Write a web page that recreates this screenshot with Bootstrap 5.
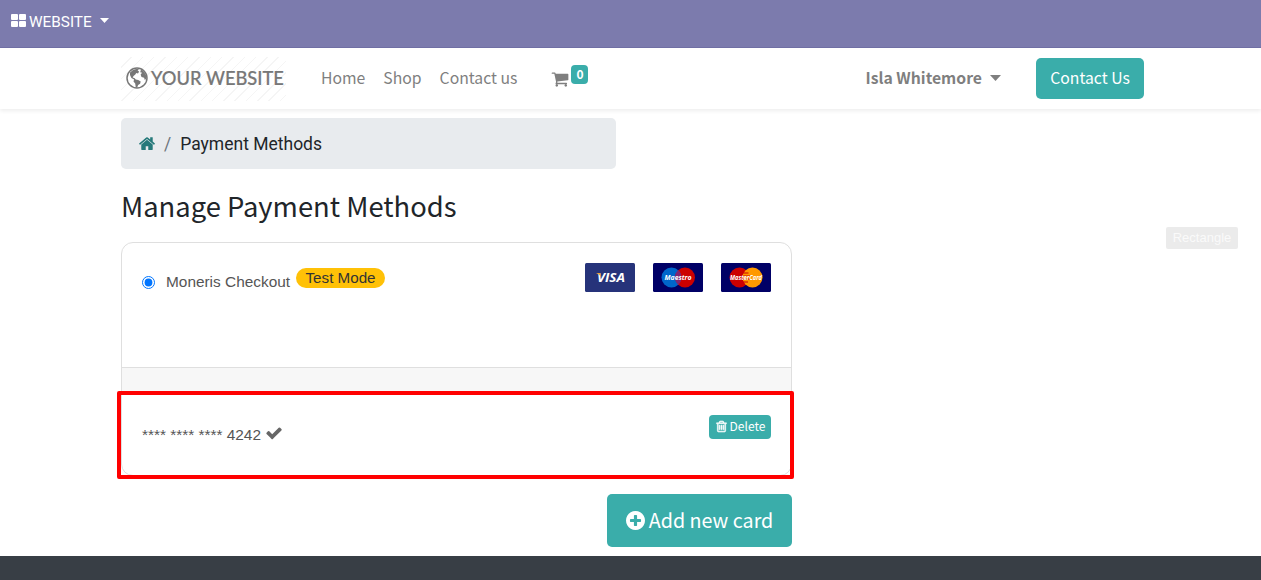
<!DOCTYPE html>
<html lang="en">
<head>
<meta charset="utf-8">
<title>Payment Methods</title>
<meta name="viewport" content="width=device-width, initial-scale=1">
<link href="https://cdn.jsdelivr.net/npm/bootstrap@5.3.0/dist/css/bootstrap.min.css" rel="stylesheet">
<style>
body{font-family:"Noto Sans CJK SC","Open Sans",sans-serif;color:#212529;height:580px;overflow:hidden;background:#fff}
.fa-i{fill:currentColor;flex:none;display:block}
.topbar{height:48px;background:#7c7bad;border-bottom:1px solid #7170a6;font:15.3px/20px Roboto,sans-serif;padding:11px 0 0 11px}
.topbar span{margin:1px 0 0 3px}
.site-nav{height:61px;box-shadow:0 2px 4px rgba(0,0,0,.07);padding:0 117px 0 121px}
.site-nav,.site-nav a{color:#7f7f7f;font-size:15.75px;line-height:24px}
.site-logo{width:165px;height:44px;padding:0 0 2px 5px;background:repeating-linear-gradient(135deg,#fff 0 7px,#f5f5f5 7px 8px);white-space:nowrap}
.site-logo span{font:500 18.3px/24px Lato,sans-serif;color:#777;-webkit-text-stroke:.2px #777;margin-left:3px}
.menu{margin:-1px 0 0 35px;gap:18px}
.cart{margin:-3px 0 0 34px}
.cart-count{font-size:12px;line-height:12px;width:17px;height:19px;padding:3px 0 0;border-radius:4px;background:#3aadaa;font-weight:700;margin:-2px 0 0 2px}
.user-link{margin-top:-2px}
.btn-teal,.btn-teal:hover{background:#3aadaa;color:#fff;border:0}
.site-nav .cta{color:#fff;width:108px;height:41px;border-radius:5px;padding:8px 0 7px;margin-left:35px}
.content-col{width:671px;margin-left:121px}
.crumbs{width:495px;height:51px;background:#e8ebee;border-radius:5px;margin-top:9px;padding:0 0 0 18px;font:17.5px/24px Roboto,sans-serif}
h1.title{font-size:27.35px;line-height:36px;font-weight:400;margin:18px 0 19px;height:36px;white-space:nowrap}
.methods{height:234px;border:1px solid #dfdfdf;border-radius:12px;font:15.4px/22px "Liberation Sans",sans-serif;color:#555}
.method{height:124px;padding:20px}
.method input{width:13px;height:13px;margin:0}
.test{font:15.2px/20px "Liberation Sans",sans-serif;height:20px;width:89px;padding:0;background:#ffc107;color:#333}
.divider{height:25px;background:#f7f7f7;border-top:1px solid #dfdfdf}
.saved{padding:23px 20px 0}
.highlight{position:absolute;left:-5px;top:148px;width:677px;height:88px;border:4.5px solid #f00;border-radius:2px}
.del{width:62px;height:24px;border-radius:4px;font:12px/18px "Noto Sans CJK SC","Open Sans",sans-serif;padding:0 0 2px}
.add{width:185px;height:53px;border-radius:5px;font-size:19.7px;line-height:30px;padding:0;margin-top:18px}
.add span{margin-top:-1px}
.foot{height:24px;background:#383e45;margin-top:9px}
.tip{position:absolute;left:1166px;top:227px;width:72px;height:22px;background:#ebebeb;color:#fafafa;font:13px/22px "Liberation Sans",sans-serif;border-radius:2px}
</style>
</head>
<body class="position-relative">
<header>
  <div class="topbar d-flex align-items-start text-white">
    <svg class="fa-i" style="margin-top:3px" width="15" height="13" viewBox="0 0 15 13"><rect width="7" height="6" rx="1"/><rect x="8" width="7" height="6" rx="1"/><rect y="7" width="7" height="6" rx="1"/><rect x="8" y="7" width="7" height="6" rx="1"/></svg>
    <span>WEBSITE</span>
    <svg class="fa-i ms-2" style="margin-top:7px" width="9" height="5" viewBox="0 0 9 5"><path d="M0 0h9L4.500 5z"/></svg>
  </div>
  <nav class="site-nav d-flex align-items-center">
    <a class="site-logo d-flex align-items-center text-decoration-none" href="#">
      <svg class="flex-shrink-0" width="22" height="22" viewBox="0 0 22 22"><circle cx="11" cy="11" r="10" fill="#fff" stroke="#777" stroke-width="1.500"/><path fill="#777" d="M4 5.500 7 3l4-1.300 2 .8-1.500 1.300 1.700.8-1.200 2-1.700-.6-1 1.500L7.500 9l-.8 1.600 2 .6 1 1.200 2.500.6 2.500 1.500-.6 2.200-2 1.400-1 2.600-1.300-.3-.6-4-1.700-1.800.6-2L5.400 11 4 8zM15 2.600l3 2.200 2 3.400.5 3.300-1.700 1.600-.7-2.400-2.600-.6-.9-2.500 1.500-1.800-1.900-.6z"/></svg>
      <span>YOUR WEBSITE</span>
    </a>
    <div class="menu d-flex">
      <a class="text-decoration-none" href="#">Home</a><a class="text-decoration-none" href="#">Shop</a><a class="text-decoration-none" href="#">Contact us</a>
    </div>
    <a class="cart d-flex text-decoration-none" href="#">
      <svg class="fa-i" style="margin-top:3px" width="18" height="18" viewBox="0 0 1792 1792"><path d="M704 1536q0 52-38 90t-90 38-90-38-38-90 38-90 90-38 90 38 38 90zm896 0q0 52-38 90t-90 38-90-38-38-90 38-90 90-38 90 38 38 90zm128-1088v512q0 24-16.500 42.500t-40.500 21.500l-1044 122q13 60 13 70 0 16-24 64h920q26 0 45 19t19 45-19 45-45 19h-1024q-26 0-45-19t-19-45q0-11 8-31.500t16-36 21.500-40 15.500-29.500l-177-823h-204q-26 0-45-19t-19-45 19-45 45-19h256q16 0 28.500 6.500t19.500 15.500 13 24.500 8 26 5.500 29.500 4.500 26h1201q26 0 45 19t19 45z"/></svg>
      <span class="badge cart-count">0</span>
    </a>
    <a class="user-link ms-auto fw-bold text-decoration-none d-flex align-items-center" href="#"><span>Isla Whitemore</span>
      <svg class="fa-i ms-2" width="11" height="6" viewBox="0 0 11 6"><path d="M0 0h11L5.500 6z"/></svg></a>
    <a class="btn btn-teal cta" href="#">Contact Us</a>
  </nav>
</header>
<main class="content-col">
  <nav class="crumbs d-flex align-items-center">
    <svg class="fa-i" style="color:#25797a" width="16" height="16" viewBox="90 130 1612 1612"><path d="M1472 992v480q0 26-19 45t-45 19h-384v-384h-256v384h-384q-26 0-45-19t-19-45v-480q0-1 .5-3t.5-3l575-474 575 474q1 2 1 6zm223-69l-62 74q-8 9-21 11h-3q-13 0-21-7l-692-577-692 577q-12 8-24 7-13-2-21-11l-62-74q-8-10-7-23.500t11-21.500l719-599q32-26 76-26t76 26l244 204v-195q0-14 9-23t23-9h192q14 0 23 9t9 23v408l219 182q10 8 11 21.500t-7 23.500z"/></svg>
    <span class="text-secondary" style="margin:0 9px">/</span><span>Payment Methods</span>
  </nav>
  <h1 class="title">Manage Payment Methods</h1>
  <section class="methods position-relative">
    <div class="method d-flex align-items-start">
      <input type="radio" checked style="margin-top:13px">
      <span style="margin:8px 0 0 11px">Moneris Checkout</span>
      <span class="badge rounded-pill test" style="margin:5px 0 0 6px">Test Mode</span>
      <div class="ms-auto d-flex" style="gap:18px">
        <svg width="50" height="29" viewBox="0 0 50 29"><rect width="50" height="29" rx="1.500" fill="#26337a"/><text x="12" y="19.300" textLength="28" lengthAdjust="spacingAndGlyphs" font-family="Open Sans,sans-serif" font-size="13" font-weight="700" font-style="italic" fill="#fff">VISA</text><path d="M11 10h4l1.500 4Q14 11 11 10z" fill="#e9a23b"/></svg>
        <svg width="50" height="29" viewBox="0 0 50 29"><rect width="50" height="29" rx="1.500" fill="#006"/><circle cx="18.500" cy="14.500" r="10" fill="#0066cb"/><circle cx="32" cy="14.500" r="10" fill="#c00"/><path d="M25.250 7.100a10 10 0 0 1 0 14.800 10 10 0 0 1 0-14.800z" fill="#66339a" opacity=".75"/><text x="11.500" y="17" textLength="27" lengthAdjust="spacingAndGlyphs" font-family="Open Sans,sans-serif" font-size="7" font-weight="700" font-style="italic" fill="#fff">Maestro</text></svg>
        <svg width="50" height="29" viewBox="0 0 50 29"><rect width="50" height="29" rx="1.500" fill="#006"/><circle cx="18.500" cy="14.500" r="10" fill="#c00"/><circle cx="31.500" cy="14.500" r="10" fill="#f90"/><path d="M21.500 10h6M21 13h8M21 16h8M22 19h5" stroke="#c00" stroke-width="1"/><text x="9" y="17" textLength="32" lengthAdjust="spacingAndGlyphs" font-family="Open Sans,sans-serif" font-size="7" font-weight="700" font-style="italic" fill="#fff">MasterCard</text></svg>
      </div>
    </div>
    <div class="divider"></div>
    <div class="saved d-flex align-items-start">
      <span style="margin-top:9px">**** **** **** 4242</span>
      <svg class="fa-i" style="margin:10px 0 0 5px;color:#666" width="16" height="17" viewBox="90 140 1612 1612"><path d="M1671 566q0 40-28 68l-724 724-136 136q-28 28-68 28t-68-28l-136-136-362-362q-28-28-28-68t28-68l136-136q28-28 68-28t68 28l294 295 656-657q28-28 68-28t68 28l136 136q28 28 28 68z"/></svg>
      <button class="btn btn-teal del ms-auto d-flex align-items-center justify-content-center"><svg class="fa-i" width="13" height="13" viewBox="0 0 1792 1792" style="margin-right:2px" stroke="currentColor" stroke-width="70"><path d="M704 736v576q0 14-9 23t-23 9h-64q-14 0-23-9t-9-23v-576q0-14 9-23t23-9h64q14 0 23 9t9 23zm256 0v576q0 14-9 23t-23 9h-64q-14 0-23-9t-9-23v-576q0-14 9-23t23-9h64q14 0 23 9t9 23zm256 0v576q0 14-9 23t-23 9h-64q-14 0-23-9t-9-23v-576q0-14 9-23t23-9h64q14 0 23 9t9 23zm128 724v-948h-896v948q0 22 7 40.500t14.500 27 10.500 8.500h832q3 0 10.500-8.500t14.500-27 7-40.500zm-672-1076h448l-48-117q-7-9-17-11h-317q-10 2-17 11zm928 32v64q0 14-9 23t-23 9h-96v948q0 83-47 143.500t-113 60.500h-832q-66 0-113-58.500t-47-141.500v-952h-96q-14 0-23-9t-9-23v-64q0-14 9-23t23-9h309l70-167q15-37 54-63t79-26h320q40 0 79 26t54 63l70 167h309q14 0 23 9t9 23z"/></svg>Delete</button>
    </div>
    <div class="highlight"></div>
  </section>
  <div class="d-flex justify-content-end">
    <button class="btn btn-teal add d-flex align-items-center justify-content-center"><svg class="fa-i" width="19" height="19" viewBox="128 128 1536 1536" style="margin-right:4px"><path d="M1344 960v-128q0-26-19-45t-45-19h-256v-256q0-26-19-45t-45-19h-128q-26 0-45 19t-19 45v256h-256q-26 0-45 19t-19 45v128q0 26 19 45t45 19h256v256q0 26 19 45t45 19h128q26 0 45-19t19-45v-256h256q26 0 45-19t19-45zm320-64q0 209-103 385.500t-279.500 279.500-385.500 103-385.500-103-279.500-279.500-103-385.500 103-385.500 279.500-279.500 385.500-103 385.500 103 279.500 279.500 103 385.500z"/></svg><span>Add new card</span></button>
  </div>
</main>
<footer class="foot"></footer>
<div class="tip text-center">Rectangle</div>
<script src="https://cdn.jsdelivr.net/npm/bootstrap@5.3.0/dist/js/bootstrap.bundle.min.js"></script>
</body>
</html>
